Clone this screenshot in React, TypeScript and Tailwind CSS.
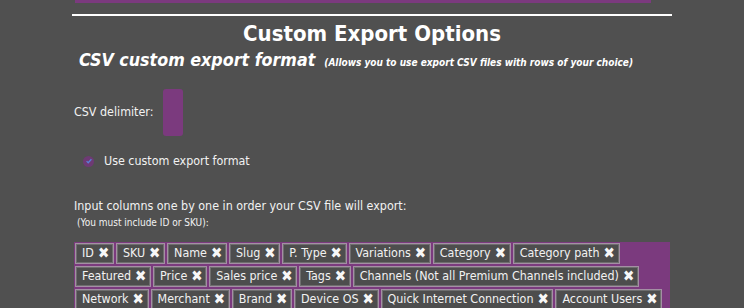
import React from 'react';

const rows: string[][] = [
  ['ID', 'SKU', 'Name', 'Slug', 'P. Type', 'Variations', 'Category', 'Category path'],
  ['Featured', 'Price', 'Sales price', 'Tags', 'Channels (Not all Premium Channels included)'],
  ['Network', 'Merchant', 'Brand', 'Device OS', 'Quick Internet Connection', 'Account Users'],
];

const Tag: React.FC<{ label: string }> = ({ label }) => (
  <div className="border border-[#a48fa4] bg-[#4d4d4d]">
    <div className="flex h-[19px] items-center gap-[4px] border border-[#6e6e6e] pl-[5px] pr-[4px] text-[12.4px] leading-none text-[#f2f2f2]">
      <span>{label}</span>
      <span className="w-[10px] text-center text-[15px] leading-none text-[#f7f7f7]">✖</span>
    </div>
  </div>
);

export default function App() {
  return (
    <div className="h-[308px] w-full overflow-hidden bg-[#505050] text-[#f2f2f2] [font-family:'DejaVu_Sans_Condensed','DejaVu_Sans',sans-serif]">
      <div className="ml-[72px] w-[600px]">
        <div className="ml-[3px] h-[3px] w-[576px] bg-[#7b3a7e]" />
        <div className="mt-[11px] h-[2px] w-full bg-white" />
        <h1 className="mt-[5px] text-center text-[22px] font-bold leading-[26px] text-white">Custom Export Options</h1>
        <div className="mt-[2px] flex items-baseline gap-[9px] pl-[7px]">
          <span className="text-[17.7px] font-bold italic leading-[22px] text-white">CSV custom export format</span>
          <span className="text-[10px] font-bold italic text-white">(Allows you to use export CSV files with rows of your choice)</span>
        </div>
        <div className="mt-[18px] flex items-center gap-[10px] pl-[2px]">
          <span className="text-[12.4px]">CSV delimiter:</span>
          <div className="h-[47px] w-[20px] rounded-[3px] bg-[#7b3a7e]" />
        </div>
        <div className="mt-[16px] flex items-center gap-[10px] pl-[11px]">
          <span className="flex h-[11px] w-[11px] items-center justify-center rounded-full bg-[#6e3a74]">
            <svg viewBox="0 0 10 10" className="h-[8px] w-[8px]">
              <path d="M2 5.2 L4 7.2 L8 2.8" fill="none" stroke="#5a7fd8" strokeWidth="1.6" />
            </svg>
          </span>
          <span className="text-[12.4px]">Use custom export format</span>
        </div>
        <div className="mt-[27px] pl-[2px] text-[12.4px] leading-[16px]">Input columns one by one in order your CSV file will export:</div>
        <div className="mt-[2px] pl-[5px] text-[10px] leading-[14px]">(You must include ID or SKU):</div>
        <div className="mt-[12px] ml-[2px] flex w-[596px] flex-col gap-[2px] bg-[#7b3a7e] p-[1px]">
          {rows.map((row, i) => (
            <div key={i} className="flex gap-[2px]">
              {row.map((t) => (
                <Tag key={t} label={t} />
              ))}
            </div>
          ))}
        </div>
      </div>
    </div>
  );
}
